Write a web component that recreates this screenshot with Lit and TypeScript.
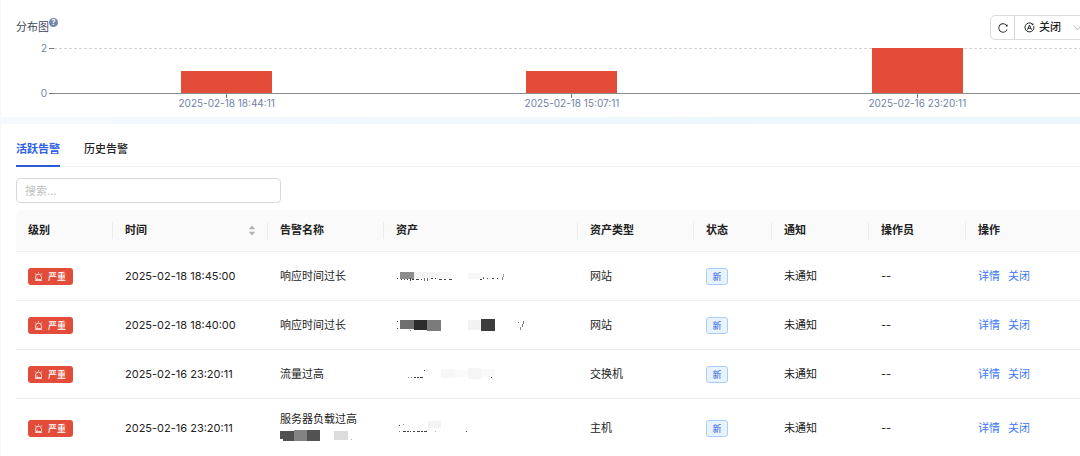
import { LitElement, html, svg, css, nothing } from "lit";
import type { SVGTemplateResult } from "lit";
import { customElement, state } from "lit/decorators.js";
import { classMap } from "lit/directives/class-map.js";

type Block = [x: number, y: number, w: number, h: number, fill: string];

interface Alarm {
  time: string;
  name: string;
  type: string;
  asset: Block[];
  detail?: Block[];
}

const BARS = [
  { time: "2025-02-18 18:44:11", count: 1 },
  { time: "2025-02-18 15:07:11", count: 1 },
  { time: "2025-02-16 23:20:11", count: 2 },
];
const MAX_COUNT = 2;

const COLUMNS = [
  { label: "级别", size: 97 },
  { label: "时间", size: 155, sortable: true },
  { label: "告警名称", size: 116 },
  { label: "资产", size: 194 },
  { label: "资产类型", size: 116 },
  { label: "状态", size: 78 },
  { label: "通知", size: 97 },
  { label: "操作员", size: 97 },
  { label: "操作", size: 124 },
];
const TOTAL = COLUMNS.reduce((sum, c) => sum + c.size, 0);

const INK = "#444";
const ALARMS: Alarm[] = [
  {
    time: "2025-02-18 18:45:00",
    name: "响应时间过长",
    type: "网站",
    asset: [
      [4, 4, 14, 7, "#8c8c8c"], [18, 4, 23, 6, "#f4f4f4"], [41, 4, 14, 7, "#f7f7f7"], [72, 5, 13, 6, "#f8f8f8"],
      [1, 10, 1, 1, INK], [5, 11, 1, 1, INK], [8, 11, 1, 1, INK], [11, 11, 1, 1, INK], [14, 10, 1, 3, INK],
      [16, 11, 2, 1, INK], [20, 11, 3, 1, INK], [25, 11, 1, 1, INK], [28, 10, 1, 3, "#777"], [31, 10, 1, 3, "#777"],
      [35, 10, 2, 1, INK], [39, 10, 1, 1, INK], [43, 11, 3, 1, INK], [48, 11, 2, 1, INK], [53, 11, 3, 1, INK],
      [84, 11, 2, 1, INK], [87, 9, 1, 2, "#777"], [91, 10, 1, 1, INK], [96, 10, 2, 1, INK], [101, 10, 1, 1, INK],
      [106, 9, 1, 3, "#777"], [107, 6, 1, 3, "#999"],
    ],
  },
  {
    time: "2025-02-18 18:40:00",
    name: "响应时间过长",
    type: "网站",
    asset: [
      [4, 3, 14, 9, "#6e6e6e"], [18, 3, 13, 10, "#2c2c2c"], [31, 3, 14, 11, "#7b7b7b"],
      [72, 3, 13, 10, "#f2f2f2"], [85, 2, 14, 12, "#3c3c3c"],
      [1, 4, 1, 1, INK], [1, 11, 1, 1, INK], [14, 13, 1, 1, "#888"],
      [122, 5, 1, 1, "#777"], [124, 10, 1, 3, "#888"], [126, 7, 1, 3, "#777"], [127, 4, 1, 3, "#777"],
    ],
  },
  {
    time: "2025-02-16 23:20:11",
    name: "流量过高",
    type: "交换机",
    asset: [
      [45, 3, 14, 9, "#f7f7f7"], [59, 4, 13, 7, "#fafafa"], [72, 2, 13, 11, "#f5f5f5"], [85, 3, 14, 8, "#f9f9f9"],
      [28, 4, 1, 1, INK], [12, 11, 1, 1, "#999"], [15, 11, 1, 1, "#777"], [18, 11, 2, 1, INK], [21, 11, 2, 1, INK],
      [24, 11, 3, 1, INK], [95, 11, 1, 1, INK],
    ],
  },
  {
    time: "2025-02-16 23:20:11",
    name: "服务器负载过高",
    type: "主机",
    asset: [
      [32, 1, 13, 7, "#f3f3f3"],
      [3, 5, 1, 1, INK], [7, 4, 1, 1, "#999"], [3, 11, 1, 1, "#777"], [7, 11, 3, 1, INK], [11, 11, 2, 1, INK],
      [14, 11, 1, 1, INK], [17, 11, 2, 1, INK], [21, 11, 3, 1, INK], [25, 11, 2, 1, INK], [28, 11, 3, 1, INK],
      [39, 11, 1, 1, "#bbb"], [70, 11, 1, 1, INK],
    ],
    detail: [
      [0, 3, 14, 8, "#515151"], [3, 11, 11, 2, "#515151"], [14, 2, 13, 11, "#838383"], [27, 2, 13, 11, "#525252"],
      [54, 3, 14, 9, "#dcdcdc"], [71, 11, 1, 1, "#bbb"],
    ],
  },
];

const antIcon = (path: string, size: number) => html`
  <svg width=${size} height=${size} viewBox="64 64 896 896" fill="currentColor" aria-hidden="true"><path d=${path}></path></svg>
`;

const ALERT =
  "M193 796c0 17.7 14.3 32 32 32h574c17.7 0 32-14.3 32-32V563c0-176.2-142.8-319-319-319S193 386.8 193 563v233zm72-233c0-136.4 110.6-247 247-247s247 110.6 247 247v193H404V585c0-5.5-4.5-10-10-10h-44c-5.5 0-10 4.5-10 10v171h-75V563zm-48.1-252.5l39.6-39.6c3.1-3.1 3.1-8.2 0-11.3l-67.9-67.9a8.03 8.03 0 00-11.3 0l-39.6 39.6a8.03 8.03 0 000 11.3l67.9 67.9c3.1 3.1 8.1 3.1 11.3 0zm669.6-79.2l-39.6-39.6a8.03 8.03 0 00-11.3 0l-67.9 67.9a8.03 8.03 0 000 11.3l39.6 39.6c3.1 3.1 8.2 3.1 11.3 0l67.9-67.9c3.1-3.2 3.1-8.2 0-11.3zM832 892H192c-17.7 0-32 14.3-32 32v24c0 4.4 3.6 8 8 8h688c4.4 0 8-3.6 8-8v-24c0-17.7-14.3-32-32-32zM484 180h56c4.4 0 8-3.6 8-8V76c0-4.4-3.6-8-8-8h-56c-4.4 0-8 3.6-8 8v96c0 4.4 3.6 8 8 8z";
const RELOAD =
  "M909.1 209.3l-56.4 44.1C775.8 155.1 656.2 92 521.9 92 290 92 102.3 279.5 102 511.5 101.7 743.7 289.8 932 521.9 932c181.3 0 335.8-115 394.6-276.1 1.5-4.2-.7-8.9-4.9-10.3l-56.7-19.5a8 8 0 00-10.1 4.8c-1.8 5-3.8 10-5.9 14.9-17.3 41-42.1 77.8-73.7 109.4A344.77 344.77 0 01655.9 829c-42.3 17.9-87.4 27-133.8 27-46.5 0-91.5-9.1-133.8-27A341.5 341.5 0 01279 755.2a342.16 342.16 0 01-73.7-109.4c-17.9-42.4-27-87.4-27-133.9s9.1-91.5 27-133.9c17.3-41 42.1-77.8 73.7-109.4 31.6-31.6 68.4-56.4 109.3-73.8 42.3-17.9 87.4-27 133.8-27 46.5 0 91.5 9.1 133.8 27a341.5 341.5 0 01109.3 73.8c9.9 9.9 19.2 20.4 27.8 31.4l-60.2 47a8 8 0 003 14.1l175.6 43c5 1.2 9.9-2.6 9.9-7.7l.8-180.9c-.1-6.6-7.8-10.3-13-6.2z";

const mask = (blocks: Block[]) => html`
  <svg class="mask" width="140" height="17" viewBox="0 0 140 17" shape-rendering="crispEdges" aria-hidden="true">
    ${blocks.map(
      ([x, y, w, h, fill]): SVGTemplateResult =>
        svg`<rect x=${x} y=${y} width=${w} height=${h} fill=${fill}></rect>`
    )}
  </svg>
`;

@customElement("app-root")
export class AppRoot extends LitElement {
  @state() private tab = "活跃告警";
  @state() private ascending = false;

  static styles = css`
    :host {
      display: block;
      height: 100vh;
      overflow: hidden auto;
      scrollbar-width: none;
      background: linear-gradient(90deg, #f5f9ff, #eef6ff 70%, #edf5ff);
      color: #222;
      font: 11px/17px Inter, "Noto Sans CJK SC", sans-serif;
    }
    * {
      box-sizing: border-box;
    }
    button,
    select,
    input {
      margin: 0;
      padding: 0;
      border: 0;
      background: none;
      color: inherit;
      font: inherit;
    }
    button {
      cursor: pointer;
    }
    .page {
      display: flex;
      flex-direction: column;
      gap: 7px;
      padding-left: 1px;
    }
    .card {
      padding-left: 15px;
      margin-right: -10px;
      background: #fff;
    }
    .chart-card {
      padding-top: 15px;
      padding-bottom: 8px;
    }
    .head {
      display: flex;
      align-items: center;
      justify-content: space-between;
      height: 25px;
    }
    .title {
      display: flex;
      margin: 0;
      font-size: 11px;
      font-weight: 400;
      color: #3d4757;
    }
    .help {
      width: 9px;
      height: 9px;
      margin-top: -1px;
      border-radius: 50%;
      background: #7486aa;
      color: #fff;
      font-size: 7px;
      font-weight: 700;
      line-height: 9px;
      text-align: center;
    }
    .tools {
      display: flex;
      height: 25px;
      border: 1px solid #dcdcdc;
      border-radius: 5px;
    }
    .refresh {
      display: grid;
      place-items: center;
      width: 24px;
      border-right: 1px solid #d4d4d4;
    }
    .auto {
      display: flex;
      align-items: center;
      gap: 4px;
      width: 74px;
      padding-left: 9px;
    }
    .auto select {
      flex: 1;
      min-width: 0;
      appearance: none;
      font-weight: 500;
      outline: 0;
    }
    .auto .chevron {
      margin-right: 7px;
    }
    .chart {
      display: grid;
      grid-template-columns: 38px 1fr;
      padding-top: 8px;
      color: #7082a8;
      font-size: 10px;
      line-height: 11px;
    }
    .y-axis {
      display: flex;
      flex-direction: column;
      justify-content: space-between;
      margin: 0;
    }
    .y-tick {
      display: flex;
      align-items: center;
      justify-content: flex-end;
      gap: 2px;
      height: 1px;
    }
    .y-tick::after {
      content: "";
      width: 5px;
      height: 1px;
      background: #777;
    }
    .plot {
      display: grid;
      grid-template-columns: repeat(3, 1fr);
      align-items: end;
      justify-items: center;
      height: 46px;
      border-bottom: 1px solid #8c8c8c;
      background: repeating-linear-gradient(90deg, #d4d4d4 0 3px, #fff 3px 5px) top / 100% 1px no-repeat;
    }
    .bar {
      width: 91px;
      background: #e24c39;
    }
    .x-axis {
      grid-column: 2;
      display: grid;
      grid-template-columns: repeat(3, 1fr);
    }
    .x-tick {
      display: flex;
      flex-direction: column;
      align-items: center;
    }
    .x-tick::before {
      content: "";
      width: 1px;
      height: 4px;
      background: #777;
    }
    .list-card {
      padding-top: 10px;
    }
    .tabs {
      display: flex;
      gap: 24px;
      border-bottom: 1px solid #f2f2f2;
    }
    .tab {
      height: 33px;
      margin-bottom: -1px;
      border-bottom: 2px solid transparent;
      font-weight: 500;
    }
    .tab.active {
      border-color: #2b59dc;
      color: #2f5fe8;
      font-weight: 700;
    }
    .search {
      display: block;
      width: 265px;
      height: 25px;
      margin: 11px 0 7px;
      padding: 0 8px;
      border: 1px solid #d9d9d9;
      border-radius: 4px;
    }
    .search::placeholder {
      color: #bfbfbf;
      opacity: 1;
    }
    table {
      width: 100%;
      border-collapse: separate;
      border-spacing: 0;
      table-layout: fixed;
    }
    th,
    td {
      padding: 12px;
      text-align: left;
      border-bottom: 1px solid #f0f0f0;
    }
    td {
      height: 49px;
    }
    th {
      background: linear-gradient(#ececec, #ececec) right / 1px 17px no-repeat #fafafa;
      font-weight: 700;
    }
    th:first-child {
      border-top-left-radius: 6px;
    }
    .sort {
      display: flex;
      align-items: center;
      justify-content: space-between;
      width: 100%;
    }
    .level {
      display: flex;
      align-items: center;
      gap: 5px;
      width: 45px;
      height: 17px;
      padding-left: 6px;
      border-radius: 3px;
      background: #e24c39;
      color: #fff;
      font-size: 9px;
      font-weight: 500;
      white-space: nowrap;
    }
    .state {
      display: block;
      width: 22px;
      height: 17px;
      border: 1px solid #a8cffb;
      border-radius: 3px;
      background: #e8f3ff;
      color: #2b5bd7;
      font-size: 9px;
      line-height: 15px;
      text-align: center;
    }
    .actions {
      display: flex;
      gap: 8px;
    }
    a {
      color: #3b78f6;
      text-decoration: none;
    }
    .mask {
      display: block;
      max-width: none;
    }
    svg {
      flex: none;
    }
  `;

  private rows() {
    return this.ascending ? [...ALARMS].reverse() : ALARMS;
  }

  render() {
    return html`
      <main class="page">
        <section class="card chart-card">
          <header class="head">
            <h2 class="title">分布图<span class="help">?</span></h2>
            <div class="tools">
              <button class="refresh" aria-label="刷新">${antIcon(RELOAD, 10)}</button>
              <label class="auto">
                <svg width="11" height="11" viewBox="0 0 22 22" fill="none" stroke="#222" stroke-width="2" aria-hidden="true">
                  <path d="M17 4.2A9 9 0 1 0 19.6 8.5"></path>
                  <path d="M14.5 5.8 18.8 6.6 18.6 2.2Z" fill="#222" stroke="none"></path>
                  <path d="M7 15.5 11 6.2 15 15.5M8.5 12.6H13.5"></path>
                </svg>
                <select aria-label="自动刷新"><option>关闭</option></select>
                <svg class="chevron" width="9" height="9" viewBox="0 0 9 9" fill="none" stroke="#bbb" aria-hidden="true">
                  <path d="M.5 2.2 4.5 7 8.5 2.2"></path>
                </svg>
              </label>
            </div>
          </header>
          <div class="chart">
            <div class="y-axis">
              <span class="y-tick">2</span>
              <span class="y-tick">0</span>
            </div>
            <div class="plot">
              ${BARS.map((b) => html`<div class="bar" style="height:${(b.count / MAX_COUNT) * 100}%"></div>`)}
            </div>
            <div class="x-axis">${BARS.map((b) => html`<span class="x-tick">${b.time}</span>`)}</div>
          </div>
        </section>

        <section class="card list-card">
          <nav class="tabs" role="tablist">
            ${["活跃告警", "历史告警"].map(
              (t) => html`
                <button
                  role="tab"
                  aria-selected=${t === this.tab}
                  class=${classMap({ tab: true, active: t === this.tab })}
                  @click=${() => (this.tab = t)}
                >${t}</button>
              `
            )}
          </nav>
          <input class="search" type="text" placeholder="搜索..." aria-label="搜索" />
          <table>
            <colgroup>
              ${COLUMNS.map((c) => html`<col style="width:${(c.size / TOTAL) * 100}%" />`)}
            </colgroup>
            <thead>
              <tr>
                ${COLUMNS.map((c) =>
                  c.sortable
                    ? html`<th>
                        <button class="sort" @click=${() => (this.ascending = !this.ascending)}>
                          ${c.label}
                          <svg width="8" height="11" viewBox="0 0 8 11" fill="#b3b3b3" aria-hidden="true">
                            <path d="M4 .5 7.3 4.3H.7ZM4 10.5 7.3 6.7H.7Z"></path>
                          </svg>
                        </button>
                      </th>`
                    : html`<th>${c.label}</th>`
                )}
              </tr>
            </thead>
            <tbody>
              ${this.rows().map(
                (a) => html`
                  <tr>
                    <td><span class="level">${antIcon(ALERT, 9)}严重</span></td>
                    <td>${a.time}</td>
                    <td>${a.name}${a.detail ? mask(a.detail) : nothing}</td>
                    <td>${mask(a.asset)}</td>
                    <td>${a.type}</td>
                    <td><span class="state">新</span></td>
                    <td>未通知</td>
                    <td>--</td>
                    <td><div class="actions"><a href="#detail">详情</a><a href="#close">关闭</a></div></td>
                  </tr>
                `
              )}
            </tbody>
          </table>
        </section>
      </main>
    `;
  }
}
